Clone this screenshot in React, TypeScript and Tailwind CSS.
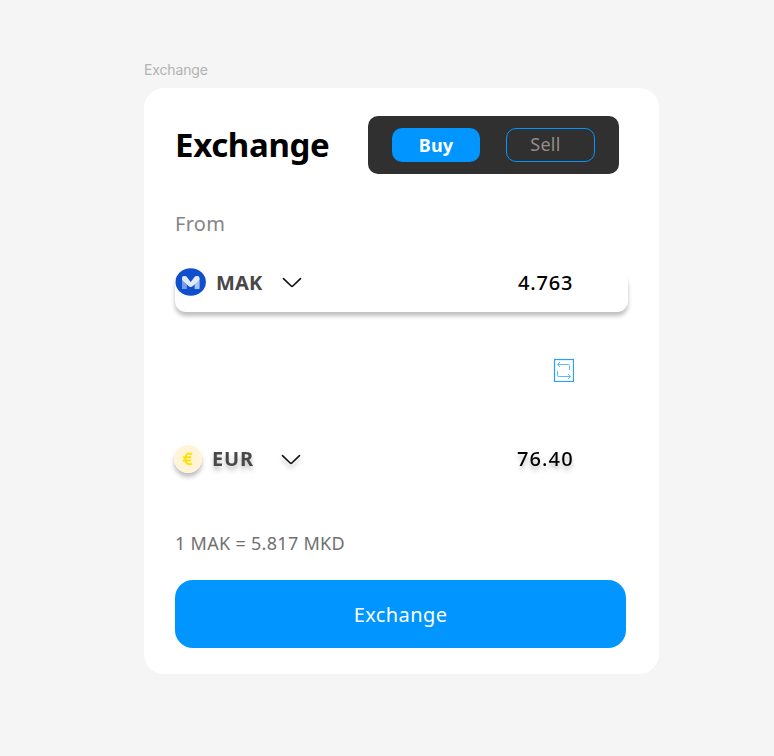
import React from "react";

function Chevron() {
  return (
    <svg width="20" height="12" viewBox="0 0 20 12" fill="none" className="relative top-px shrink-0">
      <path d="M1.5 1.6 9.2 9Q10 9.7 10.8 9L18.5 1.6" stroke="#111" strokeWidth="1.6" strokeLinecap="round" strokeLinejoin="round" />
    </svg>
  );
}

function MakCoin() {
  return (
    <svg width="31" height="28" viewBox="0 0 31 28" className="shrink-0">
      <ellipse cx="15.7" cy="14" rx="15.2" ry="13.8" fill="#0f4fce" />
      <path d="M7 10v8.4Q7 21 9.6 21h2.2V10z" fill="#759ee8" />
      <path d="M24.4 10v8.4q0 2.6-2.6 2.6h-2.2V10z" fill="#a9c3f3" />
      <path d="M7 12V9.6Q7 8 8.7 8h1.2q1.2 0 2 1l3.8 5 3.8-5q.8-1 2-1h1.2q1.7 0 1.7 1.6V12l-6.5 6q-2.2 1.8-4.4 0z" fill="#dfeafc" />
      <path d="M7 12.3V21h4.2v-4.8z" fill="#759ee8" />
      <path d="M24.4 12.3V21h-4.2v-4.8z" fill="#a9c3f3" />
    </svg>
  );
}

function EuroCoin() {
  return (
    <svg width="28" height="28" viewBox="0 0 28 28" className="shrink-0 rounded-full shadow-[0_4px_4px_rgba(0,0,0,0.25)]">
      <circle cx="14" cy="14" r="14" fill="#fff5d6" />
      <path d="M18.2 9Q11.6 6.6 11.3 13.8q.3 7.2 6.9 4.8M8.8 12.2h8.4M8.8 15.4h8.4" fill="none" stroke="#ffe000" strokeWidth="2" />
    </svg>
  );
}

function SwapIcon() {
  return (
    <svg width="21" height="24" viewBox="0 0 21 24" fill="none" className="shrink-0">
      <rect x="1.5" y="1.5" width="19" height="22" stroke="#279fff" strokeWidth="1.2" />
      <path d="M16.5 12V7.5q0-1-1-1H4.5M7 4 4.5 6.5 7 9M4.5 13v4.5q0 1 1 1h12M15 16l2.5 2.5L15 21" stroke="#5fb8ff" strokeWidth="1" />
    </svg>
  );
}

export default function App() {
  return (
    <main className="h-[756px] w-[774px] bg-[#f5f5f5] pl-[144px] pt-[59px] font-['Noto_Sans',sans-serif]">
      <div className="h-[29px] font-['Inter',sans-serif] text-[14px] leading-[21px] tracking-[-0.15px] text-[#b3b3b3]">Exchange</div>
      <section className="flex h-[586px] w-[515px] flex-col rounded-[20px] bg-white pl-[31px] pt-7">
        <header className="flex h-[58px] items-center">
          <h1 className="w-[193px] whitespace-nowrap text-[33px] font-bold leading-10 tracking-[-0.35px] text-black">Exchange</h1>
          <div className="flex h-[58px] w-[251px] items-center gap-[26px] rounded-[10px] bg-[#303030] pl-6">
            <button className="h-[34px] w-[88px] rounded-[10px] bg-[#0095ff] text-[18px] font-bold leading-[34px] tracking-[0.2px] text-white">Buy</button>
            <button className="h-[34px] w-[89px] rounded-[10px] border border-[#0095ff] pb-0.5 pr-[10px] text-[18px] leading-[30px] tracking-[0.3px] text-[#938b8b]">Sell</button>
          </div>
        </header>
        <div className="mt-[35px] h-[30px] text-[20px] leading-[30px] tracking-[0.3px] text-[#858585]">From</div>
        <div className="mt-[33px] h-10 w-[453px] rounded-[11px] bg-white shadow-[0_4px_4px_rgba(0,0,0,0.25)]">
          <div className="flex h-5 items-center">
            <MakCoin />
            <span className="ml-[10px] w-[66px] pt-px text-[20px] font-bold leading-5 tracking-[0.2px] text-[#484848]">MAK</span>
            <Chevron />
            <span className="ml-[216px] pt-px text-[20px] font-medium leading-5 tracking-[0.8px] text-black">4.763</span>
          </div>
        </div>
        <div className="mt-[46px] flex h-6 pl-[378px]">
          <SwapIcon />
        </div>
        <div className="-ml-px mt-[63px] flex h-7 items-center">
          <EuroCoin />
          <div className="ml-[10px] flex items-center drop-shadow-[0_4px_2px_rgba(0,0,0,0.25)]">
            <span className="w-[69px] text-[20px] font-bold leading-5 tracking-[0.9px] text-[#484848]">EUR</span>
            <Chevron />
            <span className="ml-[216px] text-[20px] font-medium leading-5 tracking-[1.1px] text-black">76.40</span>
          </div>
        </div>
        <div className="mt-[56px] h-[29px] text-[18px] leading-[29px] tracking-[0.3px] text-[#707070]">1 MAK = 5.817 MKD</div>
        <button className="mt-[22px] h-[68px] w-[451px] rounded-[18px] bg-[#0095ff] pt-px text-[20px] tracking-[0.4px] text-white">Exchange</button>
      </section>
    </main>
  );
}
